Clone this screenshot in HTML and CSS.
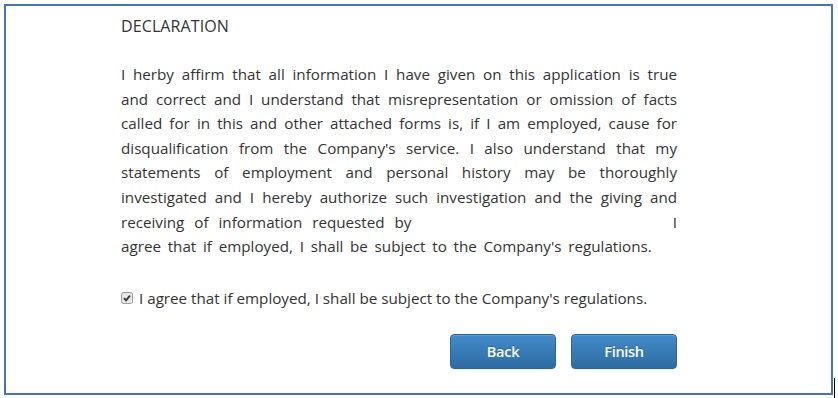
FILE: index.html
```html
<!DOCTYPE html>
<html>
<head>
<meta charset="utf-8">
<link rel="stylesheet" href="styles.css">
</head>
<body>
<div class="frame">
  <div class="content">
    <div class="title">DECLARATION</div>
    <div class="decl">
      <span class="ln">I herby affirm that all information I have given on this application is true</span>
      <span class="ln">and correct and I understand that misrepresentation or omission of facts</span>
      <span class="ln">called for in this and other attached forms is, if I am employed, cause for</span>
      <span class="ln">disqualification from the Company's service. I also understand that my</span>
      <span class="ln">statements of employment and personal history may be thoroughly</span>
      <span class="ln">investigated and I hereby authorize such investigation and the giving and</span>
      <span class="ln split"><span class="wide">receiving of information requested by</span><span>I</span></span>
      <span class="ln last">agree that if employed, I shall be subject to the Company's regulations.</span>
    </div>
    <label class="agree"><span class="check"><svg viewBox="0 0 12 12" width="12" height="12"><rect x="0.5" y="0.5" width="11" height="11" rx="2" fill="#e6e6e6" stroke="#9a9a9a"/><path d="M3 6.2 L5 8.3 L9 3.6" fill="none" stroke="#333" stroke-width="1.8"/></svg></span>I agree that if employed, I shall be subject to the Company's regulations.</label>
    <div class="actions">
      <button class="btn">Back</button>
      <button class="btn">Finish</button>
    </div>
  </div>
</div>
<div class="edge"></div>
</body>
</html>
```
FILE: styles.css
```css
html, body {
  margin: 0;
  padding: 0;
  background: #fff;
}
body {
  width: 838px;
  height: 398px;
  position: relative;
  overflow: hidden;
  font-family: "Open Sans", "Noto Sans", sans-serif;
  color: #333;
}
.frame {
  margin: 4px 0 0 4px;
  width: 825px;
  height: 387px;
  border: 2px solid #4472c4;
}
.content {
  padding: 9px 0 0 115px;
  width: 556px;
}
.title {
  font-size: 16px;
  line-height: 22px;
  letter-spacing: 0.1px;
}
.decl {
  margin-top: 25px;
  font-size: 15.2px;
  line-height: 24.6px;
}
.ln {
  display: block;
  text-align: justify;
  text-align-last: justify;
  white-space: nowrap;
}
.ln.split {
  display: flex;
  justify-content: space-between;
}
.wide {
  word-spacing: 6px;
}
.ln.last {
  text-align-last: left;
  word-spacing: 2.8px;
}
.agree {
  display: flex;
  align-items: center;
  margin-top: 29px;
  font-size: 15.2px;
  line-height: 20px;
}
.check {
  display: inline-flex;
  margin-right: 6px;
}
.actions {
  display: flex;
  justify-content: flex-end;
  gap: 15px;
  margin-top: 26px;
}
.btn {
  width: 106px;
  height: 35px;
  border: 1px solid #2b669a;
  border-radius: 4px;
  background: linear-gradient(#428bca, #2d6ca2);
  color: #fff;
  font-family: "Open Sans", sans-serif;
  font-weight: 600;
  font-size: 14.5px;
  letter-spacing: -0.3px;
  text-shadow: 0 -1px 0 rgba(0,0,0,0.2);
  box-shadow: inset 0 1px 0 rgba(255,255,255,0.15), 0 1px 1px rgba(0,0,0,0.075);
  padding: 0;
}
.edge {
  position: absolute;
  left: 834px;
  top: 378px;
  width: 1px;
  height: 20px;
  background: #000;
}
```
